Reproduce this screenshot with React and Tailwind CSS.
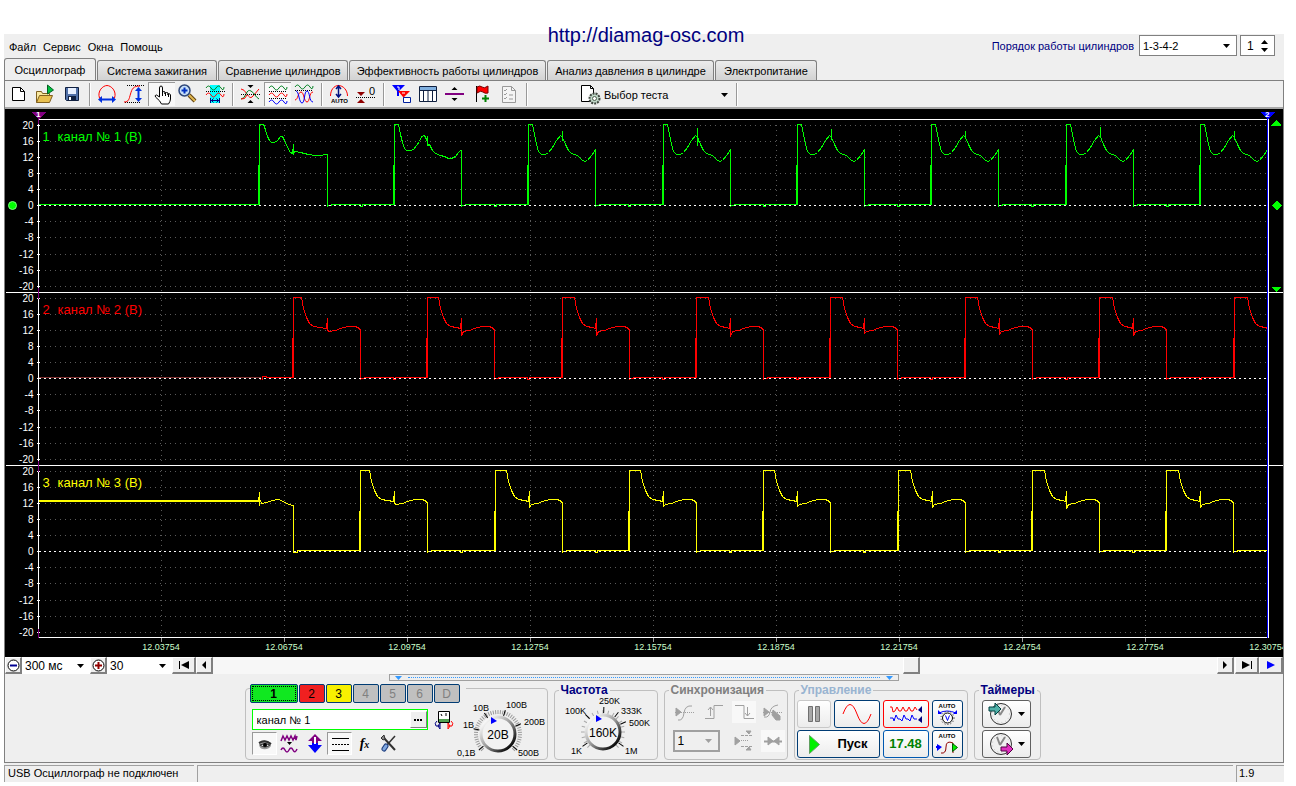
import React, { useState } from 'react';

const TABS = [
  { label: 'Осциллограф', width: 'w-[92px]' },
  { label: 'Система зажигания', width: 'w-[120px]' },
  { label: 'Сравнение цилиндров', width: 'w-[130px]' },
  { label: 'Эффективность работы цилиндров', width: 'w-[197px]' },
  { label: 'Анализ давления в цилиндре', width: 'w-[167px]' },
  { label: 'Электропитание', width: 'w-[102px]' }
];

const STEPS = [20, 16, 12, 8, 4, 0, -4, -8, -12, -16, -20];
const STEP_Y = [125, 141, 157, 173, 189, 205, 221, 237, 254, 270, 286];
const TIMES = ['12.03754', '12.06754', '12.09754', '12.12754', '12.15754', '12.18754', '12.21754', '12.24754', '12.27754', '12.30754'];

// Pulse shapes: x from the rising edge, y from the top of the channel's band
const FIRST = [[4, 0], [5, 2], [6, 6], [8, 12], [10, 16], [12, 18], [15, 18], [18, 16], [21, 12], [23, 12], [25, 16], [28, 23], [31, 28], [33, 29], [34, 20], [34, 30], [35, 27], [41, 28], [49, 30], [56, 31], [61, 31], [66, 30], [68, 30]];
const SECOND = [[4, 0], [6, 10], [8, 18], [10, 24], [12, 26], [16, 26], [19, 25], [22, 21], [25, 17], [27, 12], [30, 11], [32, 15], [33, 12], [33, 21], [35, 20], [38, 26], [41, 29], [46, 31], [50, 32], [54, 34], [57, 34], [61, 32], [64, 28], [66, 26], [67, 26]];
const valley = (top, low) => [[4, 0], [6, 10], [8, 20], [10, 27], [13, 30], [17, 30], [20, 28], [24, 23], [28, 16], [32, 11], [34, 13], [34, top], [34, low], [35, 15], [37, 20], [40, 26], [43, 29], [49, 31], [53, 35], [56, 37], [59, 36], [63, 31], [66, 27], [67, 25]];
const decay = (flat, low) => [[flat, 0], [flat + 2, 11], [flat + 5, 20], [flat + 8, 26], [flat + 12, 29], [flat + 18, 30], [33, 31], [34, 21], [34, low], [36, 34], [42, 33], [47, 31], [54, 29], [62, 29], [66, 31], [67, 33]];

const GREEN = [
  [259, FIRST], [394, SECOND], [528, valley(6, 16)], [663, valley(3, 21)], [797, valley(4, 15)],
  [931, valley(6, 14)], [1066, valley(2, 12)], [1200, valley(6, 15)]
];
const RED = [[293, decay(8, 33)], [427, decay(11, 38)], [562, decay(12, 38)], [696, decay(12, 39)], [830, decay(12, 36)], [965, decay(12, 37)], [1099, decay(13, 38)], [1234, decay(13, 36)]];
const YELLOW = [[360, decay(9, 33)], [495, decay(11, 37)], [629, decay(11, 36)], [763, decay(11, 36)], [898, decay(12, 37)], [1032, decay(12, 38)], [1166, decay(12, 37)]];

const tracePath = (pulses, top, startPath) => {
  const base = top + 80;
  let d = startPath;
  pulses.forEach(([x, shape], i) => {
    d += `H${x - 1}V${top + 41}H${x}V${base}V${top}`;
    shape.forEach(([dx, dy]) => {
      d += `L${x + dx} ${top + dy}`;
    });
    const end = x + shape[shape.length - 1][0];
    d += `V${base + 2}V${base + 1}H${end + 4}V${base}`;
    if (i < pulses.length - 1) {
      const mid = end + 33;
      d += `H${mid}V${base + 2}H${mid + 2}V${base}`;
    } else {
      d += 'H1380';
    }
  });
  return d;
};

function Channel({ offset, color, label, path }) {
  return (
    <g>
      {STEPS.map((value, i) => (
        <g key={value}>
          {value !== 0 && (
            <line x1="44" x2="1266" y1={STEP_Y[i] + offset} y2={STEP_Y[i] + offset} stroke="#5a5a5a" strokeDasharray="1 4" />
          )}
          <line x1="36" x2="39" y1={STEP_Y[i] + offset} y2={STEP_Y[i] + offset} stroke="#fff" />
          <text x="33" y={STEP_Y[i] + offset + 3} textAnchor="end" fill="#fff" className="text-[10px]">
            {value}
          </text>
        </g>
      ))}
      <path d={path} fill="none" stroke={color} />
      <line x1="38" x2="1266" y1={205 + offset} y2={205 + offset} stroke="#fff" strokeDasharray="2 3" />
      <text x="42" y={140 + offset} fill={color} className="text-[13px]">{label[0]}</text>
      <text x="57" y={140 + offset} fill={color} className="text-[13px]">{label[1]}</text>
    </g>
  );
}

function Chart() {
  return (
    <svg viewBox="5 109 1278 548" className="block w-full bg-black" role="img" aria-label="Осциллограмма">
      <defs>
        <clipPath id="plot"><rect x="5" y="109" width="1262" height="548" /></clipPath>
      </defs>
      <g transform="translate(.5 .5)" shapeRendering="crispEdges">
        {TIMES.slice(0, 9).map((t, i) => (
          <g key={t}>
            <line x1={161 + i * 123} x2={161 + i * 123} y1="124" y2="636" stroke="#5a5a5a" strokeDasharray="1 4" />
            <line x1={161 + i * 123} x2={161 + i * 123} y1="637" y2="641" stroke="#999" />
          </g>
        ))}
        <g clipPath="url(#plot)">
          <Channel offset={0} color="#00ff00" label={['1', 'канал № 1 (В)']} path={tracePath(GREEN, 124, 'M38 204')} />
          <Channel offset={173} color="#ff0000" label={['2', 'канал № 2 (В)']} path={tracePath(RED, 297, 'M260 376V379M262 379V376H266V377')} />
          <Channel
            offset={346}
            color="#ffff00"
            label={['3', 'канал № 3 (В)']}
            path={tracePath(YELLOW, 470, 'M38 500H258V501H38M258 500V497H259V491V505V498L261 503L266 502L272 500L278 499L283 501L288 504L293 505V552H297V550')}
          />
          <line x1="38" x2="260" y1="377" y2="377" stroke="#803030" />
        </g>
        <path d="M38 119H1268M5 292H1283M5 465H1283M38 637H1268M38 119V637M1268 119V637" stroke="#fff" fill="none" />
        <path d="M38 114V123M38 287V298M38 460V471M38 628V637" stroke="#800080" />
        <path d="M1267 116V637" stroke="#0000ff" />
        <path d="M31 111H46L38 119Z" fill="#800080" />
        <path d="M1260 111H1275L1267 119Z" fill="#0000ff" />
        <path d="M1276 119L1281 125H1271ZM1276 200L1281 205L1276 210L1271 205ZM1271 286H1281L1276 292Z" fill="#00ff00" />
      </g>
      <circle cx="12.5" cy="205.5" r="4" fill="#00ff00" stroke="#7aff7a" />
      <text x="36" y="117" fill="#fff" className="text-[8px] font-bold">1</text>
      <text x="1265" y="117" fill="#fff" className="text-[8px] font-bold">2</text>
      {TIMES.map((t, i) => (
        <text key={t} x={161 + i * 123} y="650" textAnchor="middle" fill="#ccffcc" className="text-[9px]">
          {t}
        </text>
      ))}
    </svg>
  );
}

function ToolButton({ label, pressed, children }) {
  return (
    <button
      aria-label={label}
      title={label}
      className={`h-6 w-[27px] shrink-0 ${pressed ? 'border-l border-t border-[#999] bg-[#f8f8f8]' : ''}`}
    >
      <svg viewBox={pressed ? '1 1 26 23' : '0 0 27 24'} className="block h-full w-full" fill="none">
        {children}
      </svg>
    </button>
  );
}

const Sep = () => <div className="mx-[3px] my-px w-0.5 border-l border-r border-l-[#999] border-r-white" />;

const WAVE = 'q2.5-4 5 0t5 0t5 0t3-1';

function Toolbar() {
  return (
    <div className="flex h-7 items-stretch border-b-2 border-[#a8a8a8] pt-px">
      <ToolButton label="Новый">
        <path d="M7.500 5.500h8l4 4v9h-12z" fill="#fff" stroke="#000" />
        <path d="M15.500 5.500v4h4" stroke="#000" />
      </ToolButton>
      <ToolButton label="Открыть">
        <path d="M4.500 20.500v-11h5l1 2h7v3" fill="#f8e8a0" stroke="#806020" />
        <path d="M4.500 20.500l3-7h13l-3 7z" fill="#e8c050" stroke="#806020" />
        <path d="M15.500 12V3l6 5z" fill="#00c040" stroke="#006020" />
      </ToolButton>
      <ToolButton label="Сохранить">
        <path d="M6.500 5.500h13v13h-12l-1-1z" fill="#5070a8" stroke="#102040" />
        <path d="M9 6h8v6H9z" fill="#e8f0ff" />
        <path d="M9 14h8v5H9z" fill="#102040" />
        <path d="M10 15h2v3h-2z" fill="#fff" />
      </ToolButton>
      <Sep />
      <ToolButton label="Растянуть по горизонтали">
        <path d="M8 16H5.500C3 9 9 3.500 13 3.500S23 9 20.500 16H18" stroke="#f00" />
        <path d="M4 17.500l4-3.500v2.500h10V14l4 3.500-4 3.500v-2.500H8V21z" fill="#0030e0" />
      </ToolButton>
      <ToolButton label="Растянуть по вертикали">
        <path d="M6 3.500h17M4 20.500h16" stroke="#000" strokeDasharray="1 1" />
        <path d="M3 20c5 0 5-3 6.500-8S12 4 19 4" stroke="#f00" />
        <path d="M17.500 5l3.500 4h-2.500v7H21l-3.500 4-3.500-4h2.500V9H14z" fill="#0030e0" />
      </ToolButton>
      <ToolButton label="Рука" pressed>
        <path d="M11.500 15V6q0-2 1.500-2t1.500 2v5-1q1.500-1 2.500 0v2-1q1.500-1 3 0v2-1q2-1 2.500 1v4q0 2-2 5h-7q-1-3-6-7-1-2 1-2l3 2z" fill="#fff" stroke="#000" />
        <path d="M14.500 10v4M17.500 11v3M20.500 12v3" stroke="#000" />
      </ToolButton>
      <ToolButton label="Масштаб">
        <path d="M14 13l6 6" stroke="#604010" strokeWidth="4" />
        <path d="M14 13l6 6" stroke="#e0b850" strokeWidth="2" />
        <circle cx="9.500" cy="8.500" r="5.500" fill="#c8e0f8" stroke="#304878" strokeWidth="1.500" />
        <path d="M9.500 5.500v6M6.500 8.500h6" stroke="#0030c0" strokeWidth="2" />
      </ToolButton>
      <ToolButton label="Измерение">
        <path d="M8 3h10v18H8z" fill="#00ffff" />
        <path d={`M4 6${WAVE}`} stroke="#008020" />
        <path d="M4 9.500h19" stroke="#000" strokeDasharray="1 1" />
        <path d={`M4 13${WAVE}`} stroke="#f00" />
        <path d="M8.500 16v5M17.500 16v5M9 18.500h8M11.500 16.500l-2 2 2 2M14.500 16.500l2 2-2 2" stroke="#000080" />
      </ToolButton>
      <Sep />
      <ToolButton label="Центрировать">
        <path d="M4 7q3 0 6 5t5 3 7-8" stroke="#f00" />
        <path d="M4 17q3 0 5-5t5-3 4 4 4 4" stroke="#008020" />
        <path d="M4 17q4 1 6-4" stroke="#f00" />
        <path d="M4 12.500h19" stroke="#000" strokeDasharray="1 1" />
        <path d="M10.500 3h6l-3 3zM10.500 21h6l-3-3z" fill="#000" />
      </ToolButton>
      <ToolButton label="Раздельно" pressed>
        <path d={`M5 6${WAVE}`} stroke="#008020" />
        <path d="M5 9.500h18M5 16.500h18" stroke="#000" strokeDasharray="1 1" />
        <path d={`M5 13${WAVE}`} stroke="#f00" />
        <path d={`M5 20${WAVE}`} stroke="#00f" />
      </ToolButton>
      <ToolButton label="Совместно">
        <path d={`M4 5${WAVE}`} stroke="#008020" />
        <path d="M4 8.500h18" stroke="#000" strokeDasharray="1 1" />
        <path d="M4 18C7 18 7 10 10 10s3 10 6 10 2-10 6-10" stroke="#f00" />
        <path d="M5 9c3 0 3 12 6 12s2-12 5-12 2 11 6 11" stroke="#00f" />
      </ToolButton>
      <Sep />
      <ToolButton label="Авто">
        <path d="M4.500 14C4.500 8 8 3.500 12.500 3.500S21.500 8 21.500 14" stroke="#f00" />
        <path d="M12.500 4v11M10 7l2.500-3L15 7M10 12l2.500 3 2.500-3" stroke="#001080" strokeWidth="1.500" />
        <text x="5" y="21" fill="#000" className="text-[6px] font-bold">AUTO</text>
      </ToolButton>
      <ToolButton label="Ноль">
        <path d="M4 10h8l-4 4zM4 21h8l-4-4z" fill="#900000" />
        <path d="M3 15.500h20" stroke="#000" strokeDasharray="1 1" />
        <text x="16" y="13" fill="#000" className="text-[11px]">0</text>
      </ToolButton>
      <Sep />
      <ToolButton label="Маркеры">
        <path d="M4 3h13l-6 6v5h-2V9z" fill="#0000ff" />
        <path d="M10 9h12l-6 6v5h-1v-5z" fill="#ff0000" />
        <path d="M9 5h2v3M14 11h3" stroke="#fff" />
        <path d="M15.500 15.500h7v5h-7z" fill="#fff" stroke="#0020a0" />
      </ToolButton>
      <ToolButton label="Таблица">
        <path d="M4.500 4.500h17v15h-17z" fill="#fff" stroke="#102040" />
        <path d="M5 5h16v3H5z" fill="#80b0e0" />
        <path d="M5 8.500h17M8.500 8v11M13 8v11M17.500 8v11" stroke="#102040" />
      </ToolButton>
      <ToolButton label="Разделитель">
        <path d="M3 11h19v2H3z" fill="#800080" />
        <path d="M9.500 8l3-3 3 3zM9.500 16l3 3 3-3z" fill="#000" />
      </ToolButton>
      <ToolButton label="Флаг">
        <path d="M7.500 4v16" stroke="#000" />
        <path d="M8 5q3-2 5 0t6-1v7q-3 1-5-1t-6 1z" fill="#f00" stroke="#700" />
        <path d="M16.500 13v7M13 16.500h7" stroke="#008000" strokeWidth="2" />
      </ToolButton>
      <ToolButton label="Список">
        <path d="M6.500 4.500h9l4 4v12h-13z" fill="#f4f4f4" stroke="#999" />
        <path d="M15.500 4.500v4h4M8 8l1 1 2-2M8 12l1 1 2-2M8 16l1 1 2-2M13 13h4M13 17h4" stroke="#999" />
      </ToolButton>
      <Sep />
      <button className="flex w-[202px] items-center pl-[49px] pr-[5px]">
        <svg viewBox="0 0 22 22" className="mr-0.5 h-[22px] w-[22px]" fill="none">
          <path d="M1.500 1.500h9l3 3v13h-12z" fill="#fff" stroke="#000" />
          <path d="M10.500 1.500v3h3" stroke="#000" />
          <circle cx="14.500" cy="14.500" r="5" fill="#c0d8c8" stroke="#404840" strokeWidth="2" strokeDasharray="2 1" />
          <circle cx="14.500" cy="14.500" r="2" fill="#fff" stroke="#506050" />
        </svg>
        <span className="grow text-left">Выбор теста</span>
        <Caret />
      </button>
      <Sep />
    </div>
  );
}

function Caret({ className = 'text-black' }) {
  return (
    <svg viewBox="0 0 7 4" className={`h-1 w-[7px] shrink-0 ${className}`}>
      <path d="M0 0h7L3.500 4z" fill="currentColor" />
    </svg>
  );
}

function Select({ label, options, className, caretClass = 'right-1.5 text-black', ...rest }) {
  return (
    <div className={`relative ${className}`}>
      <select aria-label={label} className="block h-full w-full appearance-none bg-transparent pl-[3px] outline-none" {...rest}>
        {options.map((o) => (
          <option key={o}>{o}</option>
        ))}
      </select>
      <div className={`pointer-events-none absolute inset-y-0 flex items-center ${caretClass}`}>
        <Caret className="text-current" />
      </div>
    </div>
  );
}

function ScrollButton({ label, width, children }) {
  return (
    <button
      aria-label={label}
      className={`flex h-[17px] shrink-0 items-center justify-center border border-b-2 border-r-2 border-white border-b-[#808080] border-r-[#808080] bg-[#efefef] ${width}`}
    >
      {children}
    </button>
  );
}

function ScrollRow() {
  return (
    <div className="flex h-[17px] bg-[#f7f7f7] text-[12px]">
      <ScrollButton label="Уменьшить" width="w-[17px]">
        <svg viewBox="0 0 13 13" className="h-[13px] w-[13px] shrink-0" fill="none">
          <circle cx="6.500" cy="6.500" r="5.500" fill="#fff" stroke="#000" />
          <path d="M3 6.500h7" stroke="#000090" strokeWidth="2" />
        </svg>
      </ScrollButton>
      <Select label="Развёртка" options={['300 мс']} className="w-[68px] bg-white" caretClass="right-1.5" />
      <ScrollButton label="Увеличить" width="w-[17px]">
        <svg viewBox="0 0 13 13" className="h-[13px] w-[13px] shrink-0" fill="none">
          <circle cx="6.500" cy="6.500" r="5.500" fill="#fff" stroke="#000" />
          <path d="M3 6.500h7M6.500 3v7" stroke="#900000" strokeWidth="2" />
        </svg>
      </ScrollButton>
      <Select label="Длительность" options={['30']} className="w-[65px] bg-white" caretClass="right-1.5" />
      <ScrollButton label="В начало" width="w-6">
        <svg viewBox="0 0 10 8" className="h-2 w-2.5"><path d="M0 0h1v8H0zM10 0v8L2 4z" /></svg>
      </ScrollButton>
      <ScrollButton label="Назад" width="w-[17px]">
        <svg viewBox="0 0 4 8" className="h-2 w-1"><path d="M4 0v8L0 4z" /></svg>
      </ScrollButton>
      <div className="grow-[692]" />
      <ScrollButton label="Ползунок" width="w-[17px]" />
      <div className="grow-[298]" />
      <ScrollButton label="Вперёд" width="w-[17px]">
        <svg viewBox="0 0 4 8" className="h-2 w-1"><path d="M0 0v8l4-4z" /></svg>
      </ScrollButton>
      <div className="w-px" />
      <ScrollButton label="В конец" width="w-6">
        <svg viewBox="0 0 10 8" className="h-2 w-2.5"><path d="M9 0h1v8H9zM0 0v8l8-4z" /></svg>
      </ScrollButton>
      <ScrollButton label="Воспроизвести" width="w-6">
        <svg viewBox="0 0 8 8" className="h-2 w-2"><path d="M0 0v8l8-4z" fill="#00f" /></svg>
      </ScrollButton>
    </div>
  );
}

const CHANNELS = [
  { id: '1', style: 'w-12 bg-[#10e820] text-black font-bold outline-1 outline-dotted -outline-offset-3 outline-black' },
  { id: '2', style: 'w-[26px] bg-[#f02020] text-black' },
  { id: '3', style: 'w-[26px] bg-[#f8f000] text-black' },
  { id: '4', style: 'w-[26px] bg-[#c0c0c0] text-[#808080]' },
  { id: '5', style: 'w-[26px] bg-[#c0c0c0] text-[#808080]' },
  { id: '6', style: 'w-[26px] bg-[#c0c0c0] text-[#808080]' },
  { id: 'D', style: 'w-[26px] bg-[#c0c0c0] text-[#808080]' }
];

function Dial({ id, value, labels, left, dense, ticks }) {
  const angles = Array.from({ length: dense ? 45 : 19 }, (_, i) => 135 + (i * 270) / (dense ? 44 : 18));
  return (
    <svg viewBox={`${left} 698 91 61`} className="h-[61px] w-[91px] shrink-0 overflow-visible">
      <defs>
        <linearGradient id={id} x1="0" y1="0" x2="1" y2="1">
          <stop offset="0.1" stopColor="#fff" />
          <stop offset="0.5" stopColor="#999" />
          <stop offset="0.9" stopColor="#000" />
        </linearGradient>
      </defs>
      <g transform={`translate(${left + (dense ? 41 : 38)} 734)`}>
        {angles.map((a) => (
          <line key={a} x1={dense ? 20 : 18} x2={dense ? 24 : 22} y1="0" y2="0" stroke={dense ? '#999' : '#aaa'} transform={`rotate(${a})`} />
        ))}
        {ticks.map((a) => (
          <line key={a} x1="19" x2="25" y1="0" y2="0" stroke="#000" transform={`rotate(${a})`} />
        ))}
        <circle r="17" fill="#f2f2f2" stroke={`url(#${id})`} strokeWidth="3" />
        <path d="M-7-17v7l6-3z" fill="#0000ff" />
        <text x="0" y="5" textAnchor="middle" className="text-[12px]">{value}</text>
      </g>
      {labels.map(([text, x, y]) => (
        <text key={text} x={x} y={y} className="text-[9px]">{text}</text>
      ))}
    </svg>
  );
}

function Group({ title, width, titleColor = 'text-[#000080]', children }) {
  return (
    <fieldset className={`h-[76px] min-w-0 shrink-0 rounded-[4px] border border-[#bfbfbf] ${width}`}>
      <legend className={`ml-1 h-3 px-0.5 text-[12px] font-bold leading-3 ${titleColor}`}>{title}</legend>
      {children}
    </fieldset>
  );
}

function ChannelGroup() {
  const [name, setName] = useState('канал № 1');
  return (
    <div className="mt-1 flex h-[72px] w-[303px] shrink-0 rounded-[4px] border border-[#bfbfbf]">
      <div className="-mt-[5px] w-[216px] shrink-0 pl-1">
        <div className="flex w-[216px] gap-px bg-[#efefef]">
          {CHANNELS.map((c) => (
            <button key={c.id} className={`h-[19px] shrink-0 rounded-[2px] border border-[#003c74] text-[12px] leading-none ${c.style}`}>
              {c.id}
            </button>
          ))}
        </div>
        <div className="mt-1.5 flex items-center gap-1.5 pl-0.5">
          <div className="flex h-[21px] w-[176px] items-center border border-[#00ff00] bg-white pl-1">
            <input aria-label="Имя канала" value={name} onChange={(e) => setName(e.target.value)} className="w-0 grow outline-none" />
            <button aria-label="Выбрать" className="flex h-[17px] w-[17px] items-center justify-center gap-px border border-white border-b-[#808080] border-r-[#808080] bg-[#efefef]">
              <i className="h-0.5 w-0.5 bg-black" />
              <i className="h-0.5 w-0.5 bg-black" />
              <i className="h-0.5 w-0.5 bg-black" />
            </button>
          </div>
          <button aria-label="Поменять каналы">
            <svg viewBox="0 0 20 20" className="block h-5 w-5" fill="none">
              <path d="M4.500 1.500h11v11h-11z" fill="#fff" stroke="#000" />
              <path d="M5 9h10v3H5z" fill="#50a050" />
              <path d="M7 4l1 2M12 3v3" stroke="#000" />
              <path d="M3 11q-3 2-1 5h4M6 13v6l-2-3z" stroke="#000080" />
              <path d="M17 11q3 2 1 5h-4M14 13v6l2-3z" stroke="#f00" />
            </svg>
          </button>
        </div>
        <div className="mt-0.5 flex h-[23px] items-center pl-0.5">
          <button aria-label="Показать" className="h-[23px] w-[25px] border border-white border-l-[#999] border-t-[#999] bg-[#f8f8f8]">
            <svg viewBox="0 0 23 21" className="block h-full w-full" fill="none">
              <path d="M6 9q6-4 12 1v3q-3 4-8 3-3 0-4-4z" fill="#999" />
              <path d="M6 10q6-4 12 1" stroke="#303030" strokeWidth="2" />
              <path d="M7 12q5-3 10 0-5 4-10 0z" fill="#e0e0e0" stroke="#303030" />
              <circle cx="12" cy="12" r="2" fill="#000" />
            </svg>
          </button>
          <button aria-label="Фильтр" className="w-[26px]">
            <svg viewBox="0 0 26 21" className="block h-[21px] w-[26px]" fill="none">
              <path d="M4 8l2-5 2 4 2-4 2 4 2-4 2 4 2-4 1 4 1-4M4 17q2-4 4 0t4 0 4 0 4-1" stroke="#800080" strokeWidth="1.500" />
              <path d="M10 9h5l-2.500 3z" fill="#000" />
            </svg>
          </button>
          <button aria-label="Инверсия" className="w-6">
            <svg viewBox="0 0 24 21" className="block h-[21px] w-6" fill="none">
              <path d="M12 1l7 7h-4v3H9V8H5z" fill="#800080" />
              <path d="M5 12h4v-2h6v2h4l-7 8z" fill="#0000ff" />
              <path d="M12 4v7" stroke="#fff" strokeWidth="2" />
            </svg>
          </button>
          <button aria-label="Линии" className="h-[23px] w-[25px] border border-white border-l-[#999] border-t-[#999] bg-[#f8f8f8]">
            <svg viewBox="0 0 23 21" className="block h-full w-full" fill="none">
              <path d="M4 5.500h17M4 17.500h17" stroke="#000" />
              <path d="M4 11.500h17" stroke="#000" strokeDasharray="2 1" />
            </svg>
          </button>
          <button aria-label="Функция" className="w-[26px] font-['Liberation_Serif',serif] text-[14px] font-bold italic leading-none">
            f<span className="text-[10px]">x</span>
          </button>
          <button aria-label="Настройка" className="w-[22px]">
            <svg viewBox="0 0 22 21" className="block h-[21px] w-[22px]" fill="none">
              <path d="M5 4l12 13" stroke="#303030" strokeWidth="2" />
              <path d="M17 3L9 12" stroke="#303030" strokeWidth="1.500" />
              <path d="M8 13l-2 3" stroke="#204080" strokeWidth="5" strokeLinecap="round" />
              <path d="M8 13l-2 3" stroke="#80a8e0" strokeWidth="3" strokeLinecap="round" />
              <path d="M3 5l3-3 1 4-2 1z" fill="#888" stroke="#303030" />
            </svg>
          </button>
        </div>
      </div>
      <div className="-ml-[5px] mt-[9px]">
        <Dial
          id="volts"
          value="20В"
          left={457}
          dense
          ticks={[140, 192, 237, 287, 336, 400]}
          labels={[['10В', 473, 711], ['100В', 506, 708], ['1В', 463, 728], ['200В', 524, 725], ['0,1В', 457, 756], ['500В', 518, 756]]}
        />
      </div>
    </div>
  );
}

function SyncButton({ label, active, children }) {
  return (
    <button disabled aria-label={label} className={`h-[22px] w-6 ${active ? 'bg-[#f8f8f8]' : ''}`}>
      <svg viewBox="0 0 24 22" className="block h-full w-full" fill="none" stroke="#a0a0a0">
        {children}
      </svg>
    </button>
  );
}

function ControlButton({ label, border = 'border-[#003c74]', className = '', children }) {
  return (
    <button aria-label={label} className={`flex h-7 items-center justify-center rounded-[3px] border bg-linear-to-b from-white to-[#ececec] ${border} ${className}`}>
      {children}
    </button>
  );
}

function Clock({ children }) {
  return (
    <svg viewBox="0 0 26 24" className="h-6 w-[26px]" fill="none">
      <circle cx="13" cy="12" r="10.500" fill="#f0f0f0" stroke="#303030" />
      <circle cx="13" cy="12" r="8.500" stroke="#c8c8c8" strokeDasharray="1 3" />
      <path d="M12 13L9 5M12 13l5-8" stroke="#888" strokeWidth="2" />
      {children}
    </svg>
  );
}

function ControlPanel() {
  return (
    <div className="flex justify-center gap-1.5 pb-0.5 pr-[3px]">
      <ChannelGroup />
      <Group title="Частота" width="w-[104px]">
        <div className="pl-2.5">
          <Dial
            id="freq"
            value="160K"
            left={564}
            ticks={[145, 225, 272, 308, 336, 395]}
            labels={[['100K', 564, 716], ['250K', 598, 706], ['333K', 620, 716], ['500K', 628, 728], ['1K', 570, 756], ['1M', 624, 756]]}
          />
        </div>
      </Group>
      <Group title="Синхронизация" width="w-[124px]" titleColor="text-[#808080]">
        <div className="mt-[5px] grid grid-cols-4 gap-x-1 gap-y-[7px] pl-2">
          <SyncButton label="Уровень">
            <path d="M2 11.500h19" strokeDasharray="1 1" />
            <path d="M5 19q5 1 6-7t8-7" />
            <path d="M3 7l5 4-5 4z" fill="#a0a0a0" />
          </SyncButton>
          <SyncButton label="Фронт">
            <path d="M3 17.500h9v-13h9M8.500 15V6M6 9l2.500-3L11 9" />
          </SyncButton>
          <SyncButton label="Спад" active>
            <path d="M3 4.500h9v13h10M15.500 6v9M13 12l2.500 3 2.500-3" />
          </SyncButton>
          <SyncButton label="Вручную">
            <path d="M2 11.500h19" strokeDasharray="1 1" />
            <path d="M3 16q5 1 6-5t8-7" />
            <path d="M3 7l5 4-5 4zM12 9l7 6v4h-4l-4-5z" fill="#a0a0a0" />
          </SyncButton>
          <Select label="Канал синхронизации" options={['1']} disabled className="col-span-2 h-[22px] w-[47px] border-2 border-[#a0a0a0] text-[12px]" caretClass="right-1.5 text-[#a0a0a0]" />
          <SyncButton label="Развёртка">
            <path d="M3 10.500h14" strokeDasharray="1 1" />
            <path d="M9 5.500h12M9 16.500h12" strokeDasharray="3 1" />
            <path d="M3 7l5 4-5 4zM14 1h5l-2 3zM14 20h5l-2-3z" fill="#a0a0a0" />
          </SyncButton>
          <SyncButton label="Сжать" active>
            <path d="M3 11.500h18" strokeWidth="2" />
            <path d="M7 7l5 4-5 4zM18 7l-5 4 5 4z" fill="#a0a0a0" />
          </SyncButton>
        </div>
      </Group>
      <Group title="Управление" width="w-[174px]" titleColor="text-[#99b4d1]">
        <div className="ml-0.5 mt-1 grid grid-cols-[34px_46px_46px_31px] gap-x-[3px] gap-y-0.5">
          <ControlButton label="Пауза" border="border-[#c8c8c8]">
            <svg viewBox="0 0 12 16" className="h-4 w-3"><path d="M.500.500h4v15h-4zM7.500.500h4v15h-4z" fill="#a8a8a8" stroke="#707070" /></svg>
          </ControlButton>
          <ControlButton label="Синус">
            <svg viewBox="0 0 30 20" className="h-5 w-[30px]" fill="none"><path d="M1 10Q8-9 15 10t14 0" stroke="#f00" /></svg>
          </ControlButton>
          <ControlButton label="Осциллограмма" border="border-[#f00]">
            <svg viewBox="0 0 34 20" className="h-5 w-[34px]" fill="none">
              <path d="M1 3h2l1 5 2-1 2-4 2 4h2l2-4 2 4h2l2-4 2 4h2l2-4 2 3" stroke="#f00" />
              <path d="M1 14h3l1 3 2-6 2 4h2l2 2 2-6 2 4h2l2 2 2-6 2 4h3" stroke="#00f" />
              <path d="M33 2v7l-4-3zM33 12v7l-4-3z" fill="#000080" />
            </svg>
          </ControlButton>
          <ControlButton label="Авто усиление">
            <svg viewBox="0 0 27 24" className="h-6 w-[27px]" fill="none">
              <text x="13" y="6" textAnchor="middle" fill="#000" className="text-[6px] font-bold">AUTO</text>
              <path d="M5 11q8-4 17 0" stroke="#00f" />
              <path d="M4 8v4h4zM23 8v4h-4z" fill="#00f" />
              <circle cx="13.500" cy="16" r="6.500" stroke="#303030" strokeDasharray="1 2" />
              <circle cx="13.500" cy="16" r="5" fill="#fff" stroke="#000" />
              <path d="M11.500 13.500l2 5 2-5" stroke="#00f" />
            </svg>
          </ControlButton>
          <ControlButton label="Пуск" className="col-span-2 text-[13px] font-bold">
            <svg viewBox="0 0 11 19" className="mr-[18px] h-[19px] w-[11px]"><path d="M.500.500v18l10-9z" fill="#00f000" stroke="#60a060" /></svg>
            Пуск
          </ControlButton>
          <ControlButton label="Таймер 17.48" border="border-[#0058b0]" className="text-[13px] font-bold text-[#008000]">17.48</ControlButton>
          <ControlButton label="Авто запуск">
            <svg viewBox="0 0 27 24" className="h-6 w-[27px]" fill="none">
              <text x="13" y="6" textAnchor="middle" fill="#000" className="text-[6px] font-bold">AUTO</text>
              <path d="M7 21q5 1 5-6t7-4v10" stroke="#900000" />
              <path d="M3 12l5 3-5 4v-3H2v-2h1z" fill="#00f" />
              <path d="M18.500 11.500v8l5-4z" fill="#00f000" stroke="#006000" />
            </svg>
          </ControlButton>
        </div>
      </Group>
      <Group title="Таймеры" width="w-[67px]">
        <div className="ml-[7px] mt-1 grid w-[49px] gap-0.5">
          <ControlButton label="Таймер начала" border="border-[#606060]" className="gap-1">
            <Clock><path d="M1 5h6V1l6 6-6 6V9H1z" fill="#50b0a8" stroke="#004040" /></Clock>
            <Caret />
          </ControlButton>
          <ControlButton label="Таймер окончания" border="border-[#606060]" className="gap-1">
            <Clock><path d="M13 15h6v-4l6 6-6 6v-4h-6z" fill="#e030c0" stroke="#500040" /></Clock>
            <Caret />
          </ControlButton>
        </div>
      </Group>
    </div>
  );
}

function App() {
  const [tab, setTab] = useState(0);

  return (
    <div className="relative bg-white pl-1 pr-3 pt-[34px] font-['Liberation_Sans',Arial,sans-serif] text-[11px] leading-[14px] text-black">
      <a href="http://diamag-osc.com" className="absolute left-0 right-1 top-[23px] z-10 mx-auto w-max text-[20px] leading-6 text-[#000080]">
        http://diamag-osc.com
      </a>
      <div className="bg-[#efefef]">
        <header className="flex h-6 items-start">
          <nav className="mt-1.5 flex grow gap-[7px] pl-[5px]">
            <button>Файл</button>
            <button>Сервис</button>
            <button>Окна</button>
            <button>Помощь</button>
          </nav>
          <label htmlFor="order" className="mr-[5px] mt-[5px] text-[#000080]">Порядок работы цилиндров</label>
          <Select id="order" options={['1-3-4-2']} className="mt-px h-[21px] w-[98px] border border-[#808080] bg-white" caretClass="right-1.5" />
          <div className="ml-[3px] mr-[9px] mt-px flex h-[21px] w-[35px] items-center border border-[#808080] bg-white">
            <input aria-label="Номер цилиндра" defaultValue="1" className="w-0 grow pl-1.5 text-[12px] outline-none" />
            <div className="mr-1.5 grid gap-1">
              <button aria-label="Больше"><Caret className="block rotate-180" /></button>
              <button aria-label="Меньше"><Caret className="block" /></button>
            </div>
          </div>
        </header>

        <div role="tablist" className="flex h-[22px] items-end">
          {TABS.map((t, i) => (
            <button
              key={t.label}
              role="tab"
              aria-selected={tab === i}
              onClick={() => setTab(i)}
              className={`shrink-0 whitespace-nowrap rounded-t-[3px] border border-b-0 border-[#808080] ${t.width} ${
                tab === i ? 'h-[22px] bg-[#efefef]' : 'ml-px h-5 bg-linear-to-b from-[#ececec] to-[#d2d2d2]'
              }`}
            >
              {t.label}
            </button>
          ))}
        </div>

        <main className="border border-[#808080]">
          <Toolbar />
          <Chart />
          <ScrollRow />
          <div className="flex h-2 justify-center">
            <button aria-label="Свернуть панель" className="flex h-[7px] w-[510px] items-center justify-between border border-[#a0a0a0] px-[5px]">
              <Caret className="text-[#3399ff]" />
              <span className="mx-1.5 grow border-t border-dotted border-[#3399ff]" />
              <Caret className="text-[#3399ff]" />
            </button>
          </div>
          <div className="pt-0.5">
            <ControlPanel />
          </div>
        </main>

        <footer className="mt-0.5 flex h-[17px] gap-[3px]">
          <div className="w-[190px] border-l border-t border-[#a0a0a0] pl-[3px]">USB Осциллограф не подключен</div>
          <div className="grow border-l border-t border-[#a0a0a0]" />
          <div className="w-12 border-l border-t border-[#a0a0a0] pl-0.5">1.9</div>
        </footer>
      </div>
    </div>
  );
}

export default App;
